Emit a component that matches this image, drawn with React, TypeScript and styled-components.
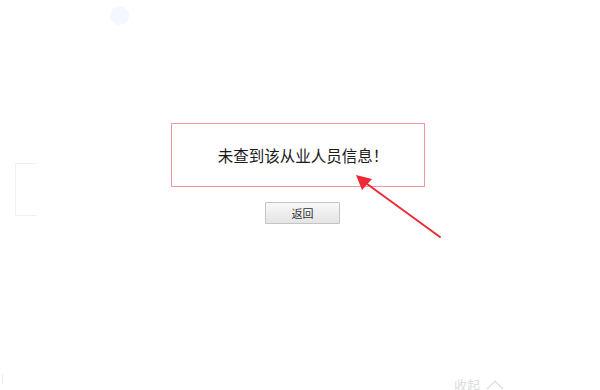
import React from "react";
import styled, { createGlobalStyle } from "styled-components";

const GlobalStyle = createGlobalStyle`
  html, body {
    margin: 0;
    padding: 0;
    background: #ffffff;
    font-family: "Liberation Sans", "Noto Sans CJK SC", sans-serif;
  }
`;

const Page = styled.div`
  position: relative;
  width: 600px;
  height: 390px;
  overflow: hidden;
  background: #ffffff;
`;

const Content = styled.div`
  display: flex;
  flex-direction: column;
  align-items: center;
  padding: 123px 5px 0 0;
`;

const MessageBox = styled.div`
  box-sizing: border-box;
  width: 254px;
  height: 64px;
  border: 1px solid #ec9aa0;
  display: flex;
  align-items: center;
  justify-content: center;
  padding: 0 0 1px 11px;
`;

const Message = styled.span`
  font-size: 15.5px;
  color: #1a1a1a;
`;

const BackButton = styled.button`
  box-sizing: border-box;
  margin: 15px 0 0 10px;
  width: 75px;
  height: 22px;
  border: 1px solid #c4c4c4;
  border-radius: 1px;
  background: linear-gradient(#f8f8f8, #e4e4e4);
  font-family: "Noto Sans CJK SC", sans-serif;
  font-size: 11px;
  color: #333;
  padding: 0;
  cursor: pointer;
`;

const Arrow = styled.svg`
  position: absolute;
  left: 350px;
  top: 168px;
`;

const Bubble = styled.div`
  position: absolute;
  left: 110px;
  top: 6px;
  width: 19px;
  height: 19px;
  border-radius: 50%;
  background: #f3f8fe;
`;

const SideTab = styled.div`
  position: absolute;
  left: 15px;
  top: 163px;
  width: 22px;
  height: 53px;
  box-sizing: border-box;
  border: 1px solid #f1f1f1;
  border-right: none;
`;

const CollapseBar = styled.div`
  position: absolute;
  left: 454px;
  top: 375px;
  display: flex;
  align-items: center;
  gap: 6px;
  font-family: "Noto Sans CJK SC", sans-serif;
  font-size: 13px;
  color: #dcdcdc;
`;

const LeftMark = styled.div`
  position: absolute;
  left: 2px;
  top: 374px;
  width: 1px;
  height: 10px;
  background: #eeeeee;
`;

export default function App() {
  return (
    <Page>
      <GlobalStyle />
      <Bubble />
      <SideTab />
      <LeftMark />
      <Content>
        <MessageBox>
          <Message>未查到该从业人员信息！</Message>
        </MessageBox>
        <BackButton>返回</BackButton>
      </Content>
      <Arrow width="95" height="75" viewBox="0 0 95 75">
        <line x1="90" y1="69" x2="13" y2="13" stroke="#ee2a36" strokeWidth="2" strokeLinecap="round" />
        <polygon points="6,7 22,11 12,22" fill="#ee2a36" />
      </Arrow>
      <CollapseBar>
        <span>收起</span>
        <svg width="18" height="10" viewBox="0 0 18 10">
          <polyline points="1,9 9,1 17,9" fill="none" stroke="#dcdcdc" strokeWidth="1.2" />
        </svg>
      </CollapseBar>
    </Page>
  );
}
